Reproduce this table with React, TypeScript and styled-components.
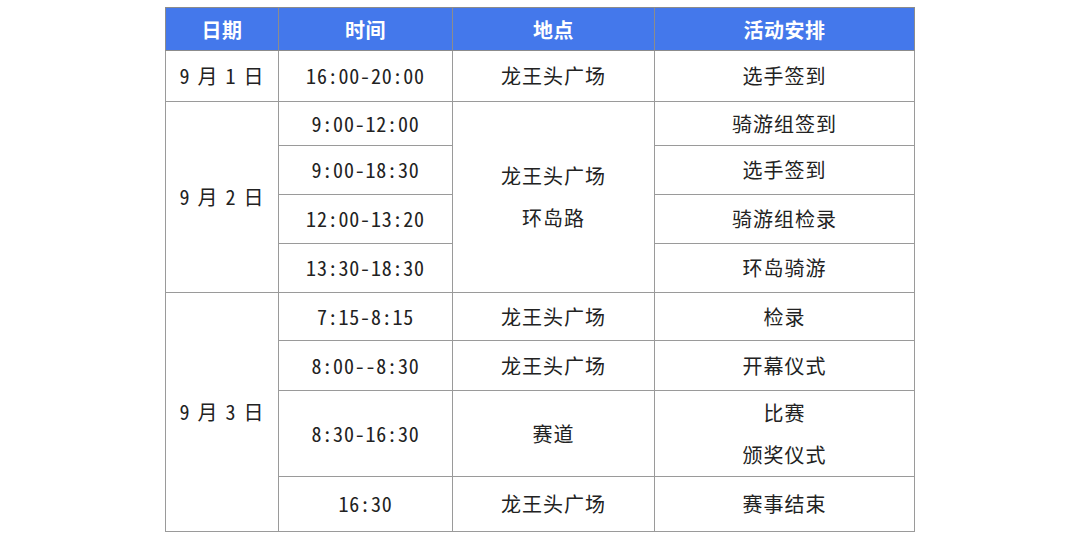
import { Fragment } from "react";
import styled, { createGlobalStyle } from "styled-components";

const GlobalStyle = createGlobalStyle`
  html, body {
    margin: 0;
    padding: 0;
    background: #ffffff;
  }
  body {
    font-family: "Noto Sans CJK SC", "Noto Sans", sans-serif;
  }
`;

const Page = styled.div`
  width: 1080px;
  height: 539px;
  display: flex;
  justify-content: center;
  padding-top: 7px;
  box-sizing: border-box;
`;

const Table = styled.table`
  border-collapse: collapse;
  table-layout: fixed;
  height: 524px;
  border: 1px solid #8c8c8c;
  color: #222222;
`;

const HeadCell = styled.th<{ $w: number }>`
  width: ${(p) => p.$w}px;
  height: 42px;
  padding: 0;
  background: #4478eb;
  color: #ffffff;
  font-size: 20px;
  font-weight: 700;
  letter-spacing: 0.5px;
  border: 1px solid #8c8c8c;
  text-align: center;
  vertical-align: middle;
`;

const Row = styled.tr<{ $h: number }>`
  height: ${(p) => p.$h}px;
`;

const Cell = styled.td<{ $num?: boolean }>`
  padding: 0;
  border: 1px solid #9a9a9a;
  text-align: center;
  vertical-align: middle;
  font-size: 20px;
  line-height: 42px;
  letter-spacing: ${(p) => (p.$num ? "0.8px" : "1px")};
  font-feature-settings: "hwid" 1;
  white-space: nowrap;
`;

const DateCell = styled(Cell)`
  word-spacing: -4px;
  letter-spacing: 1px;
`;

const Line = styled.div`
  line-height: 42px;
`;

type Slot = {
  h: number;
  date?: { text: string; span: number };
  time: string;
  place?: { lines: string[]; span: number };
  acts: string[];
};

const slots: Slot[] = [
  { h: 51, date: { text: "9 月 1 日", span: 1 }, time: "16:00-20:00", place: { lines: ["龙王头广场"], span: 1 }, acts: ["选手签到"] },
  { h: 44, date: { text: "9 月 2 日", span: 4 }, time: "9:00-12:00", place: { lines: ["龙王头广场", "环岛路"], span: 4 }, acts: ["骑游组签到"] },
  { h: 49, time: "9:00-18:30", acts: ["选手签到"] },
  { h: 49, time: "12:00-13:20", acts: ["骑游组检录"] },
  { h: 49, time: "13:30-18:30", acts: ["环岛骑游"] },
  { h: 48, date: { text: "9 月 3 日", span: 4 }, time: "7:15-8:15", place: { lines: ["龙王头广场"], span: 1 }, acts: ["检录"] },
  { h: 50, time: "8:00--8:30", place: { lines: ["龙王头广场"], span: 1 }, acts: ["开幕仪式"] },
  { h: 86, time: "8:30-16:30", place: { lines: ["赛道"], span: 1 }, acts: ["比赛", "颁奖仪式"] },
  { h: 55, time: "16:30", place: { lines: ["龙王头广场"], span: 1 }, acts: ["赛事结束"] },
];

export default function App() {
  return (
    <>
      <GlobalStyle />
      <Page>
        <Table>
          <thead>
            <tr>
              <HeadCell $w={112}>日期</HeadCell>
              <HeadCell $w={173}>时间</HeadCell>
              <HeadCell $w={201}>地点</HeadCell>
              <HeadCell $w={259}>活动安排</HeadCell>
            </tr>
          </thead>
          <tbody>
            {slots.map((s, i) => (
              <Row key={i} $h={s.h}>
                {s.date && <DateCell rowSpan={s.date.span}>{s.date.text}</DateCell>}
                <Cell $num>{s.time}</Cell>
                {s.place && (
                  <Cell rowSpan={s.place.span}>
                    {s.place.lines.map((l) => (
                      <Line key={l}>{l}</Line>
                    ))}
                  </Cell>
                )}
                <Cell>
                  {s.acts.map((a) => (
                    <Fragment key={a}>
                      <Line>{a}</Line>
                    </Fragment>
                  ))}
                </Cell>
              </Row>
            ))}
          </tbody>
        </Table>
      </Page>
    </>
  );
}
